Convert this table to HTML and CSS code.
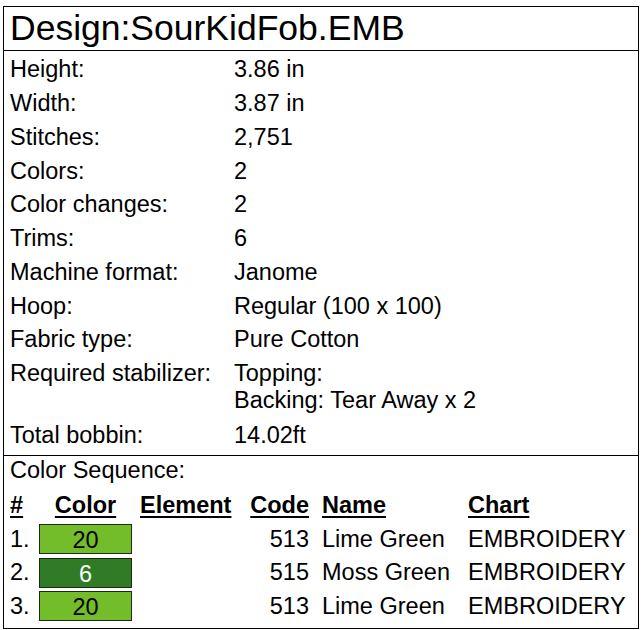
FILE: index.html
```html
<!DOCTYPE html>
<html>
<head>
<meta charset="utf-8">
<link rel="stylesheet" href="styles.css">
</head>
<body>
<div class="sheet">
  <div class="title">Design:SourKidFob.EMB</div>
  <div class="specs">
    <div class="row"><div class="label">Height:</div><div class="value">3.86 in</div></div>
    <div class="row"><div class="label">Width:</div><div class="value">3.87 in</div></div>
    <div class="row"><div class="label">Stitches:</div><div class="value">2,751</div></div>
    <div class="row"><div class="label">Colors:</div><div class="value">2</div></div>
    <div class="row"><div class="label">Color changes:</div><div class="value">2</div></div>
    <div class="row"><div class="label">Trims:</div><div class="value">6</div></div>
    <div class="row"><div class="label">Machine format:</div><div class="value">Janome</div></div>
    <div class="row"><div class="label">Hoop:</div><div class="value">Regular (100 x 100)</div></div>
    <div class="row"><div class="label">Fabric type:</div><div class="value">Pure Cotton</div></div>
    <div class="row multi"><div class="label">Required stabilizer:</div><div class="value">Topping:<br>Backing: Tear Away x 2</div></div>
    <div class="row"><div class="label">Total bobbin:</div><div class="value">14.02ft</div></div>
  </div>
  <div class="seq">
    <div class="seq-title">Color Sequence:</div>
    <div class="grid">
      <div class="h c-num">#</div>
      <div class="h c-color">Color</div>
      <div class="h c-elem">Element</div>
      <div class="h c-code">Code</div>
      <div class="h c-name">Name</div>
      <div class="h c-chart">Chart</div>

      <div class="c-num">1.</div>
      <div class="c-color"><span class="swatch lime">20</span></div>
      <div class="c-elem"></div>
      <div class="c-code">513</div>
      <div class="c-name">Lime Green</div>
      <div class="c-chart">EMBROIDERY</div>

      <div class="c-num">2.</div>
      <div class="c-color"><span class="swatch moss">6</span></div>
      <div class="c-elem"></div>
      <div class="c-code">515</div>
      <div class="c-name">Moss Green</div>
      <div class="c-chart">EMBROIDERY</div>

      <div class="c-num">3.</div>
      <div class="c-color"><span class="swatch lime">20</span></div>
      <div class="c-elem"></div>
      <div class="c-code">513</div>
      <div class="c-name">Lime Green</div>
      <div class="c-chart">EMBROIDERY</div>
    </div>
  </div>
</div>
</body>
</html>
```
FILE: styles.css
```css
html, body {
  margin: 0;
  padding: 0;
  background: #fff;
}
body {
  font-family: "Liberation Sans", Arial, sans-serif;
  color: #000;
  font-size: 23.5px;
}
.sheet {
  margin: 6px 0 0 3px;
  width: 636px;
  box-sizing: border-box;
  border: 1px solid #000;
}
.title {
  font-size: 35.5px;
  line-height: 43px;
  padding-left: 6px;
  border-bottom: 1px solid #000;
}
.specs {
  padding: 2px 0 3px 0;
  border-bottom: 1px solid #000;
}
.row {
  display: flex;
  line-height: 27px;
  padding: 3.375px 0;
}
.row.multi {
  padding-bottom: 4.5px;
}
.label {
  width: 224px;
  padding-left: 6px;
}
.value {
  flex: 1;
}
.seq {
  padding: 1px 0 5px 0;
}
.seq-title {
  line-height: 27px;
  padding-left: 6px;
  margin-bottom: 4px;
}
.grid {
  display: grid;
  grid-template-columns: 29px 93px 117px 60px 159px auto;
  grid-template-rows: 34px 33.5px 33.5px 33.5px;
  align-items: center;
  padding-left: 6px;
}
.h {
  font-weight: bold;
  text-decoration: underline;
  text-decoration-thickness: 2px;
  text-underline-offset: 3px;
}
.c-color {
  text-align: center;
}
.c-elem {
  padding-left: 8px;
}
.c-code {
  text-align: right;
}
.c-name {
  padding-left: 13px;
}
.swatch {
  display: block;
  height: 30px;
  line-height: 30px;
  box-sizing: border-box;
  border: 1px solid #1d2a12;
  text-align: center;
}
.swatch.lime {
  background: #74bd2a;
  color: #000;
}
.swatch.moss {
  background: #2f7b26;
  color: #fff;
}
```
